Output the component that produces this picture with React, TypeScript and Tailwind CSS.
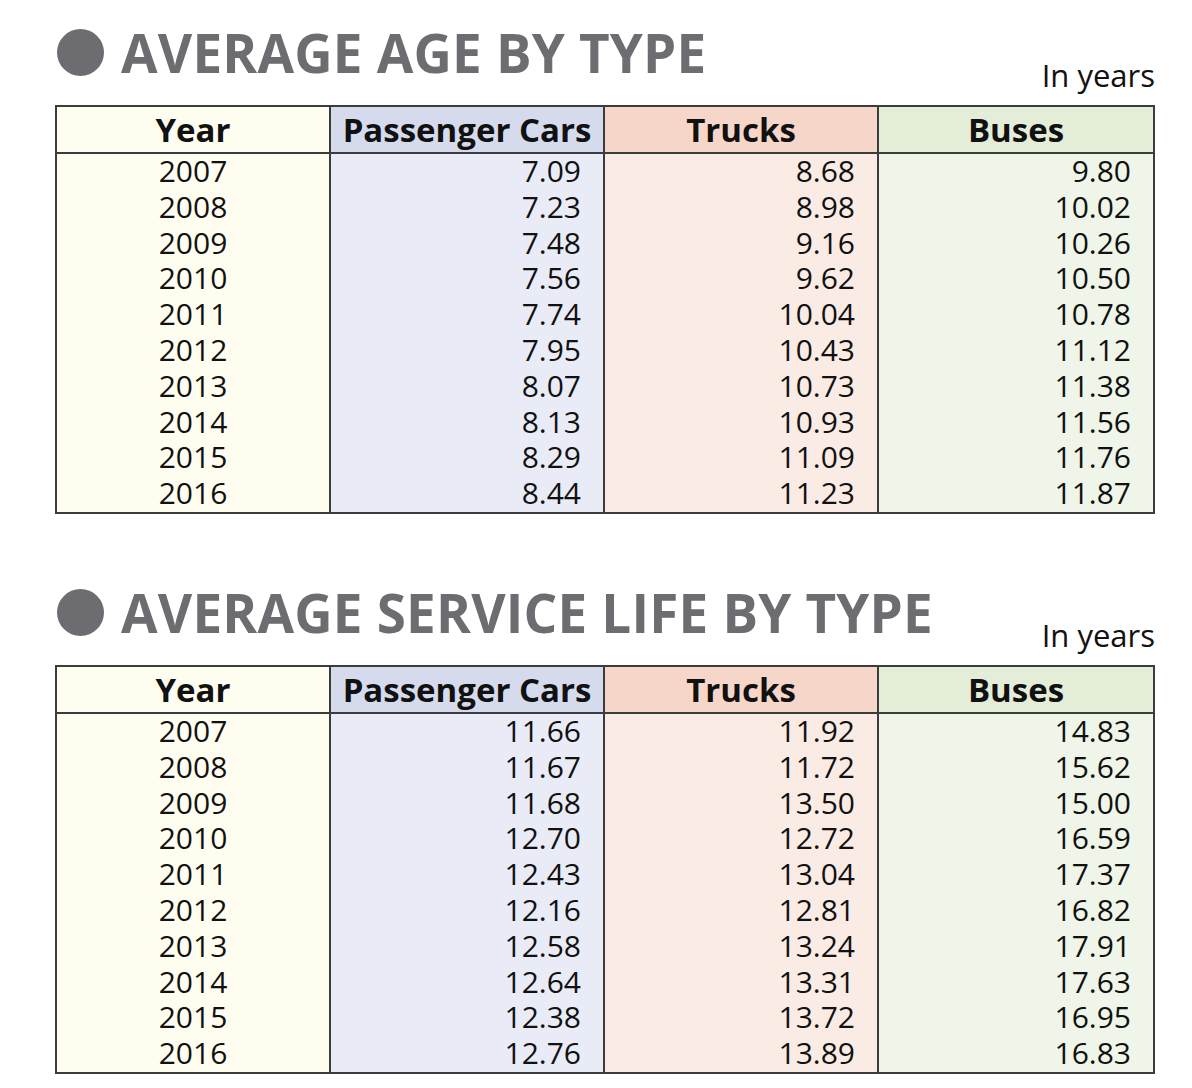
const ageRows: [string, string, string, string][] = [
  ['2007', '7.09', '8.68', '9.80'],
  ['2008', '7.23', '8.98', '10.02'],
  ['2009', '7.48', '9.16', '10.26'],
  ['2010', '7.56', '9.62', '10.50'],
  ['2011', '7.74', '10.04', '10.78'],
  ['2012', '7.95', '10.43', '11.12'],
  ['2013', '8.07', '10.73', '11.38'],
  ['2014', '8.13', '10.93', '11.56'],
  ['2015', '8.29', '11.09', '11.76'],
  ['2016', '8.44', '11.23', '11.87'],
];

const lifeRows: [string, string, string, string][] = [
  ['2007', '11.66', '11.92', '14.83'],
  ['2008', '11.67', '11.72', '15.62'],
  ['2009', '11.68', '13.50', '15.00'],
  ['2010', '12.70', '12.72', '16.59'],
  ['2011', '12.43', '13.04', '17.37'],
  ['2012', '12.16', '12.81', '16.82'],
  ['2013', '12.58', '13.24', '17.91'],
  ['2014', '12.64', '13.31', '17.63'],
  ['2015', '12.38', '13.72', '16.95'],
  ['2016', '12.76', '13.89', '16.83'],
];

const columns = [
  { title: 'Year', head: 'bg-[#fffdf0]', body: 'bg-[#fffdf0]', align: 'text-center' },
  { title: 'Passenger Cars', head: 'bg-[#d5dbec]', body: 'bg-[#e9ecf6]', align: 'text-right pr-[22px]' },
  { title: 'Trucks', head: 'bg-[#f5d6c8]', body: 'bg-[#faece4]', align: 'text-right pr-[22px]' },
  { title: 'Buses', head: 'bg-[#e3edd7]', body: 'bg-[#eff5e8]', align: 'text-right pr-[22px]' },
];

function Heading({ title }: { title: string }) {
  return (
    <div className="flex items-end justify-between h-[105px]">
      <div className="flex items-center gap-[17px] self-start pt-[29px] pl-[2px]">
        <div className="w-[47px] h-[47px] rounded-full bg-[#6d6c71]" />
        <h2 className="text-[53px] leading-[47px] font-bold text-[#6d6c71] tracking-[0.2px]">{title}</h2>
      </div>
      <span className="text-[31px] leading-none text-[#111] mb-[14px]">In years</span>
    </div>
  );
}

function DataTable({ rows }: { rows: [string, string, string, string][] }) {
  return (
    <div className="grid grid-cols-4 border-2 border-[#3c3c3c]">
      {columns.map((col, ci) => (
        <div key={col.title} className={`flex flex-col ${ci < 3 ? 'border-r-2 border-[#3c3c3c]' : ''}`}>
          <div className={`h-[47px] flex items-center justify-center border-b-2 border-[#3c3c3c] text-[33px] font-bold text-[#111] ${col.head}`}>
            {col.title}
          </div>
          <div className={`flex flex-col ${col.body}`}>
            {rows.map((r) => (
              <div key={r[0]} className={`h-[35.8px] leading-[33px] text-[30px] text-[#111] ${col.align}`}>
                {r[ci]}
              </div>
            ))}
          </div>
        </div>
      ))}
    </div>
  );
}

export default function App() {
  return (
    <div className="w-[1192px] h-[1088px] bg-white pl-[55px] pr-[37px] font-['Open_Sans',sans-serif]">
      <Heading title="AVERAGE AGE BY TYPE" />
      <DataTable rows={ageRows} />
      <div className="h-[46px]" />
      <Heading title="AVERAGE SERVICE LIFE BY TYPE" />
      <DataTable rows={lifeRows} />
    </div>
  );
}
